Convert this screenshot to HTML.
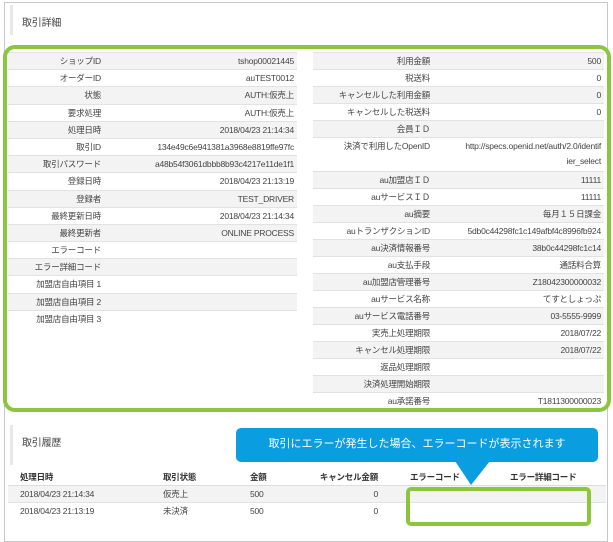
<!DOCTYPE html><html><head><meta charset="utf-8"><style>
*{margin:0;padding:0;box-sizing:border-box}
body{width:613px;height:530px;background:#fff;font-family:"Liberation Sans","Noto Sans CJK JP",sans-serif;font-size:8.5px;color:#444;position:relative;overflow:hidden;letter-spacing:-0.2px}
.frame{position:absolute;left:4px;top:2px;width:604px;height:540px;border:1px solid #c8c8c8}
.hbar{position:absolute;left:10px;width:3px;background:#e8e8e8}
.h{position:absolute;left:22px;font-size:10px;color:#444}
.r{position:relative;border-top:1px solid #e2e2e2}
.r:nth-child(odd){background:#f3f3f3}
.r:nth-child(even){background:#fff}
.l{position:absolute;right:0;text-align:right}
.v{position:absolute;right:3px;text-align:right}
.green{position:absolute;border:4px solid #8cc63f;border-radius:12px}
#L .l{right:196px}
</style></head><body>
<div class="frame"></div>
<div class="hbar" style="top:5px;height:30px"></div>
<div class="h" style="top:14px">取引詳細</div>

<div id="L" style="position:absolute;left:8px;top:52px;width:289px">
<div class="r" style="height:17.2px;line-height:16px"><span class="l">ショップID</span><span class="v">tshop00021445</span></div>
<div class="r" style="height:17.2px;line-height:16px"><span class="l">オーダーID</span><span class="v">auTEST0012</span></div>
<div class="r" style="height:17.2px;line-height:16px"><span class="l">状態</span><span class="v">AUTH:仮売上</span></div>
<div class="r" style="height:17.2px;line-height:16px"><span class="l">要求処理</span><span class="v">AUTH:仮売上</span></div>
<div class="r" style="height:17.2px;line-height:16px"><span class="l">処理日時</span><span class="v">2018/04/23 21:14:34</span></div>
<div class="r" style="height:17.2px;line-height:16px"><span class="l">取引ID</span><span class="v">134e49c6e941381a3968e8819ffe97fc</span></div>
<div class="r" style="height:17.2px;line-height:16px"><span class="l">取引パスワード</span><span class="v">a48b54f3061dbbb8b93c4217e11de1f1</span></div>
<div class="r" style="height:17.2px;line-height:16px"><span class="l">登録日時</span><span class="v">2018/04/23 21:13:19</span></div>
<div class="r" style="height:17.2px;line-height:16px"><span class="l">登録者</span><span class="v">TEST_DRIVER</span></div>
<div class="r" style="height:17.2px;line-height:16px"><span class="l">最終更新日時</span><span class="v">2018/04/23 21:14:34</span></div>
<div class="r" style="height:17.2px;line-height:16px"><span class="l">最終更新者</span><span class="v">ONLINE PROCESS</span></div>
<div class="r" style="height:17.2px;line-height:16px"><span class="l">エラーコード</span></div>
<div class="r" style="height:17.2px;line-height:16px"><span class="l">エラー詳細コード</span></div>
<div class="r" style="height:17.2px;line-height:16px"><span class="l">加盟店自由項目 1</span></div>
<div class="r" style="height:17.2px;line-height:16px"><span class="l">加盟店自由項目 2</span></div>
<div class="r" style="height:17.2px;line-height:16px"><span class="l">加盟店自由項目 3</span></div>
</div>

<div style="position:absolute;left:313px;top:52px;width:291px">
<div class="r" style="height:17px;line-height:16px"><span class="l" style="right:174px">利用金額</span><span class="v">500</span></div>
<div class="r" style="height:17px;line-height:16px"><span class="l" style="right:174px">税送料</span><span class="v">0</span></div>
<div class="r" style="height:17px;line-height:16px"><span class="l" style="right:174px">キャンセルした利用金額</span><span class="v">0</span></div>
<div class="r" style="height:17px;line-height:16px"><span class="l" style="right:174px">キャンセルした税送料</span><span class="v">0</span></div>
<div class="r" style="height:17px;line-height:16px"><span class="l" style="right:174px">会員ＩＤ</span></div>
<div class="r" style="height:34px;line-height:15px"><span class="l" style="right:174px;top:1px">決済で利用したOpenID</span><span class="v" style="top:1px">http://specs.openid.net/auth/2.0/identif<br>ier_select</span></div>
<div class="r" style="height:17px;line-height:16px"><span class="l" style="right:174px">au加盟店ＩＤ</span><span class="v">11111</span></div>
<div class="r" style="height:17px;line-height:16px"><span class="l" style="right:174px">auサービスＩＤ</span><span class="v">11111</span></div>
<div class="r" style="height:17px;line-height:16px"><span class="l" style="right:174px">au摘要</span><span class="v">毎月１５日課金</span></div>
<div class="r" style="height:17px;line-height:16px"><span class="l" style="right:174px">auトランザクションID</span><span class="v">5db0c44298fc1c149afbf4c8996fb924</span></div>
<div class="r" style="height:17px;line-height:16px"><span class="l" style="right:174px">au決済情報番号</span><span class="v">38b0c44298fc1c14</span></div>
<div class="r" style="height:17px;line-height:16px"><span class="l" style="right:174px">au支払手段</span><span class="v">通話料合算</span></div>
<div class="r" style="height:17px;line-height:16px"><span class="l" style="right:174px">au加盟店管理番号</span><span class="v">Z18042300000032</span></div>
<div class="r" style="height:17px;line-height:16px"><span class="l" style="right:174px">auサービス名称</span><span class="v">てすとしょっぷ</span></div>
<div class="r" style="height:17px;line-height:16px"><span class="l" style="right:174px">auサービス電話番号</span><span class="v">03-5555-9999</span></div>
<div class="r" style="height:17px;line-height:16px"><span class="l" style="right:174px">実売上処理期限</span><span class="v">2018/07/22</span></div>
<div class="r" style="height:17px;line-height:16px"><span class="l" style="right:174px">キャンセル処理期限</span><span class="v">2018/07/22</span></div>
<div class="r" style="height:17px;line-height:16px"><span class="l" style="right:174px">返品処理期限</span></div>
<div class="r" style="height:17px;line-height:16px"><span class="l" style="right:174px">決済処理開始期限</span></div>
<div class="r" style="height:17px;line-height:16px"><span class="l" style="right:174px">au承諾番号</span><span class="v">T1811300000023</span></div>
</div>

<div class="green" style="left:3px;top:45px;width:608px;height:367px"></div>

<div class="hbar" style="top:425px;height:40px"></div>
<div class="h" style="top:434px">取引履歴</div>

<div style="position:absolute;left:236px;top:428px;width:362px;height:34px;background:#0a9de0;border-radius:5px;color:#fff;font-size:11px;line-height:32px;text-align:center;letter-spacing:0">取引にエラーが発生した場合、エラーコードが表示されます</div>
<svg style="position:absolute;left:0;top:0" width="613" height="530"><polygon points="455,461 490,461 471,485" fill="#0a9de0"/></svg>

<div style="position:absolute;left:8px;top:469px;width:598px;height:17px;font-weight:bold;color:#333;line-height:16px;border-bottom:1px solid #ddd">
<span style="position:absolute;left:12px">処理日時</span><span style="position:absolute;left:155px">取引状態</span><span style="position:absolute;left:242px">金額</span><span style="position:absolute;right:228px">キャンセル金額</span><span style="position:absolute;left:402px">エラーコード</span><span style="position:absolute;left:502px">エラー詳細コード</span></div>
<div style="position:absolute;left:8px;top:486px;width:598px;height:17px;background:#f3f3f3;line-height:16px;border-bottom:1px solid #e2e2e2">
<span style="position:absolute;left:12px">2018/04/23 21:14:34</span><span style="position:absolute;left:155px">仮売上</span><span style="position:absolute;left:242px">500</span><span style="position:absolute;right:228px">0</span></div>
<div style="position:absolute;left:8px;top:503px;width:598px;height:17px;background:#fff;line-height:16px">
<span style="position:absolute;left:12px">2018/04/23 21:13:19</span><span style="position:absolute;left:155px">未決済</span><span style="position:absolute;left:242px">500</span><span style="position:absolute;right:228px">0</span></div>

<div class="green" style="left:406px;top:487px;width:185px;height:39px;border-radius:5px"></div>
</body></html>
